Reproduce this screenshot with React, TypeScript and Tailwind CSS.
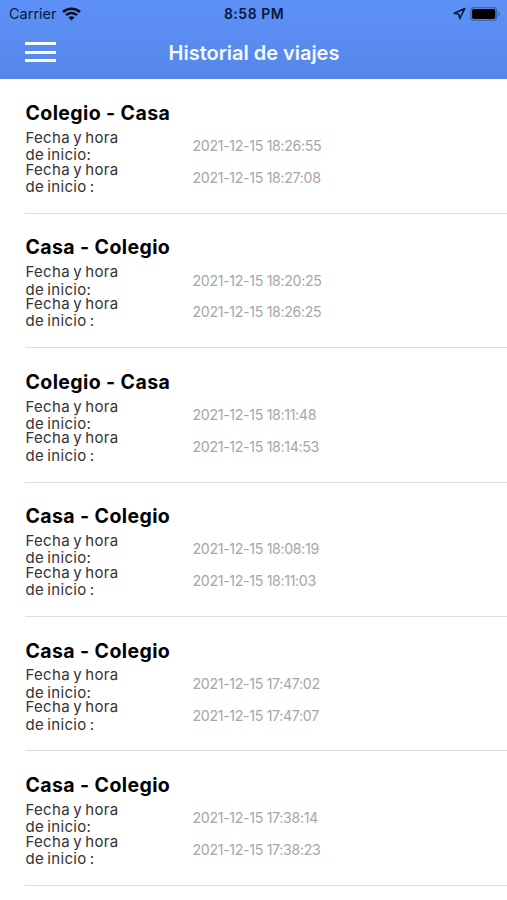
type Trip = { title: string; start: string; end: string };

const trips: Trip[] = [
  { title: "Colegio - Casa", start: "2021-12-15 18:26:55", end: "2021-12-15 18:27:08" },
  { title: "Casa - Colegio", start: "2021-12-15 18:20:25", end: "2021-12-15 18:26:25" },
  { title: "Colegio - Casa", start: "2021-12-15 18:11:48", end: "2021-12-15 18:14:53" },
  { title: "Casa - Colegio", start: "2021-12-15 18:08:19", end: "2021-12-15 18:11:03" },
  { title: "Casa - Colegio", start: "2021-12-15 17:47:02", end: "2021-12-15 17:47:07" },
  { title: "Casa - Colegio", start: "2021-12-15 17:38:14", end: "2021-12-15 17:38:23" },
];

function StatusBar() {
  return (
    <div className="grid h-[27px] grid-cols-3 items-center pr-[6px] pl-[9px] text-[#071a3c]">
      <div className="flex items-center gap-[5px]">
        <span className="text-[14.5px] leading-[27px]">Carrier</span>
        <svg width="19" height="14" viewBox="0 0 19 14" fill="none" stroke="#030d24" strokeWidth="2.5">
          <path d="M1 5C5.7.5 13.3.5 18 5" />
          <path d="M4 8.2c3.1-3 7.9-3 11 0" />
          <path d="M6.5 10.6c1.7-1.7 4.3-1.7 6 0l-3 3z" fill="#030d24" stroke="none" />
        </svg>
      </div>
      <span className="-ml-[2px] pt-px text-center text-[14px] leading-[26px] font-semibold tracking-[0.5px]">8:58 PM</span>
      <div className="flex items-center justify-end gap-[4px]">
        <svg width="13" height="13" viewBox="0 0 13 13" fill="none" stroke="#071a3c" strokeWidth="1.6" strokeLinejoin="round">
          <path d="M11.8 1.5 1.3 6.3l4.6 1 .9 4.3z" />
        </svg>
        <svg width="31" height="14" viewBox="0 0 31 14">
          <rect x=".7" y=".7" width="26" height="12.6" rx="3.4" fill="none" stroke="#3c63b4" strokeWidth="1.3" />
          <rect x="2.1" y="2" width="23.2" height="10" rx="1.8" fill="#000" />
          <path d="M28.3 4.8c2.2.7 2.2 3.7 0 4.4z" fill="#3c63b4" />
        </svg>
      </div>
    </div>
  );
}

function NavBar() {
  return (
    <div className="grid h-[52px] grid-cols-[31px_1fr_31px] items-center px-[25px]">
      <button aria-label="Menu" className="flex flex-col gap-[5.6px] pb-[2px]">
        <span className="h-[3px] w-[31px] bg-white" />
        <span className="h-[3px] w-[31px] bg-white" />
        <span className="h-[3px] w-[31px] bg-white" />
      </button>
      <h1 className="pb-px pl-px text-center text-[20px] leading-[24px] font-semibold tracking-[-0.02px] text-[#f4f8ff]">
        Historial de viajes
      </h1>
    </div>
  );
}

function Field({ label, value }: { label: string; value: string }) {
  return (
    <div className="flex h-[31.8px] items-center">
      <div className="w-[167px] text-[15px] leading-[17.5px] tracking-[0.3px] whitespace-nowrap text-[#333] [word-spacing:-1.2px]">
        Fecha y hora
        <br />
        {label}
      </div>
      <div className="text-[14.2px] leading-[20px] tracking-[-0.34px] whitespace-nowrap text-[#a6a6a6]">{value}</div>
    </div>
  );
}

function TripRow({ trip }: { trip: Trip }) {
  return (
    <li className="ml-[25px] h-[134.4px] border-b border-[#dcdcdc] pt-[20.6px] pl-[0.5px]">
      <h2 className="h-[30.4px] text-[19.5px] leading-[26px] font-bold tracking-[0.39px] whitespace-nowrap text-black">
        {trip.title}
      </h2>
      <Field label="de inicio:" value={trip.start} />
      <Field label="de inicio :" value={trip.end} />
    </li>
  );
}

export default function App() {
  return (
    <div className="h-[900px] w-[507px] overflow-hidden bg-white font-['Inter','Liberation_Sans',sans-serif]">
      <header className="h-[79.4px] bg-linear-to-b from-[#5e91f7] to-[#5587ea]">
        <StatusBar />
        <NavBar />
      </header>
      <ul>
        {trips.map((trip) => (
          <TripRow key={trip.start} trip={trip} />
        ))}
      </ul>
    </div>
  );
}
